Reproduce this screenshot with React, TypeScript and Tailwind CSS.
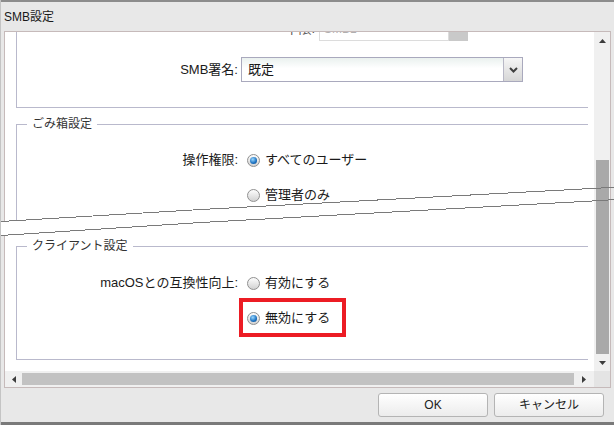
import React from 'react';

function Radio({ checked, label }: { checked?: boolean; label: string }) {
  return (
    <span className="flex items-center gap-[5px]">
      <span className="ml-[6px] flex h-[13px] w-[13px] items-center justify-center rounded-full border border-[#909090] bg-[linear-gradient(#fdfdfd,#d2d2d2)]">
        {checked && (
          <span className="h-[7px] w-[7px] rounded-full bg-[radial-gradient(circle_at_40%_35%,#9ad8ff,#1a6fbf_60%,#0d4785)]" />
        )}
      </span>
      <span className="text-[13px] leading-5 text-[#1a1a1a]">{label}</span>
    </span>
  );
}

function Arrow({ dir }: { dir: 'up' | 'down' | 'left' | 'right' }) {
  const points = {
    up: '0,4 7,4 3.5,0',
    down: '0,0 7,0 3.5,4',
    left: '4,0 4,7 0,3.5',
    right: '0,0 0,7 4,3.5',
  }[dir];
  const vertical = dir === 'up' || dir === 'down';
  return (
    <svg width={vertical ? 7 : 4} height={vertical ? 4 : 7} viewBox={vertical ? '0 0 7 4' : '0 0 4 7'}>
      <polygon points={points} fill="#3c3c3c" />
    </svg>
  );
}

function Legend({ children }: { children: React.ReactNode }) {
  return <legend className="ml-[10px] px-[5px] text-[12px] leading-4 text-[#333]">{children}</legend>;
}

export default function App() {
  return (
    <div className="relative flex h-[425px] w-[614px] flex-col overflow-hidden border-l border-[#c4c4c4] bg-[#e8e8e8] font-['Liberation_Sans','Noto_Sans_CJK_JP',sans-serif] text-[#1a1a1a]">
      {/* title bar */}
      <div className="flex h-[31px] shrink-0 items-center border-t-2 border-[#8c8c8c] pl-[3px] text-[12px]">SMB設定</div>

      {/* scroll frame */}
      <div className="mx-[3px] grid h-[357px] shrink-0 grid-cols-[1fr_16px] grid-rows-[1fr_16px] border border-[#c6baba] bg-white">
        <div className="relative overflow-hidden">
          <div className="flex flex-col pl-[11px]">
            {/* SMB protocol (scrolled partly out of view) */}
            <div className="flex h-[76px] w-[572px] flex-col border-b border-l border-[#b9b9cc]">
              <div className="-mt-[15px] flex h-6 items-center">
                <span className="w-[298px] text-right text-[13px] text-[#555]">下限:</span>
                <span className="ml-[4px] flex h-6 w-[130px] items-center border border-[#dcdcdc] pl-[4px] text-[12px] text-[#b0b0b0]">SMB1</span>
                <span className="h-6 w-[19px] bg-[#c9c9c9]" />
              </div>
              <div className="mt-[16px] flex h-[25px] items-center">
                <span className="w-[221px] text-right text-[13px]">SMB署名:</span>
                <div className="ml-[3px] flex h-[25px] w-[282px] border border-[#a9a9bd] bg-[linear-gradient(#eaf1ef,#ffffff_45%)]">
                  <span className="flex-1 pl-[6px] text-[13px] leading-[23px]">既定</span>
                  <span className="flex w-[19px] items-center justify-center border-l border-[#b8b8c6] bg-[linear-gradient(#f6f6f6,#d6d6d6)]">
                    <svg width="9" height="6" viewBox="0 0 9 6">
                      <polyline points="1,1 4.5,4.5 8,1" fill="none" stroke="#404040" strokeWidth="2" />
                    </svg>
                  </span>
                </div>
              </div>
            </div>

            {/* trash settings */}
            <fieldset className="mt-[8px] w-[572px] border-l border-t border-[#b9b9cc]">
              <Legend>ごみ箱設定</Legend>
              <div className="flex flex-col gap-[15px] pt-[18px] pb-[25px]">
                <div className="flex h-5 items-center">
                  <span className="w-[221px] text-right text-[13px]">操作権限:</span>
                  <div className="ml-[3px]">
                    <Radio checked label="すべてのユーザー" />
                  </div>
                </div>
                <div className="flex h-5 items-center pl-[224px]">
                  <Radio label="管理者のみ" />
                </div>
              </div>
            </fieldset>

            {/* client settings */}
            <fieldset className="mt-[8px] w-[572px] border-b border-l border-t border-[#b9b9cc]">
              <Legend>クライアント設定</Legend>
              <div className="flex flex-col gap-[15px] pt-[19px] pb-[31px]">
                <div className="flex h-5 items-center">
                  <span className="w-[221px] text-right text-[13px]">macOSとの互換性向上:</span>
                  <div className="ml-[3px]">
                    <Radio label="有効にする" />
                  </div>
                </div>
                <div className="flex h-5 items-center pl-[224px]">
                  <div className="relative">
                    <Radio checked label="無効にする" />
                    <span className="absolute -left-[2px] -top-[10px] h-[39px] w-[107px] border-4 border-[#ec1c24]" />
                  </div>
                </div>
              </div>
            </fieldset>
          </div>
        </div>

        {/* vertical scrollbar */}
        <div className="flex flex-col bg-[#f0f0f0]">
          <div className="flex h-[17px] items-center justify-center">
            <Arrow dir="up" />
          </div>
          <div className="flex flex-1 flex-col justify-end">
            <div className="ml-[2px] h-[194px] w-[13px] bg-[#a9a9a9]" />
          </div>
          <div className="flex h-[17px] items-center justify-center">
            <Arrow dir="down" />
          </div>
        </div>

        {/* horizontal scrollbar */}
        <div className="flex bg-[#f0f0f0]">
          <div className="flex w-[17px] items-center justify-center">
            <Arrow dir="left" />
          </div>
          <div className="my-[2px] w-[552px] bg-[#c2c2c2]" />
          <div className="flex flex-1 items-center justify-center">
            <Arrow dir="right" />
          </div>
        </div>
        <div className="bg-[#e4e4e4]" />
      </div>

      {/* footer */}
      <div className="flex h-[34px] shrink-0 justify-end gap-[6px] pr-[10px] pt-[5px]">
        <button type="button" className="h-6 w-[110px] rounded-[3px] border border-[#b4b4b4] bg-[linear-gradient(#ffffff,#ececec)] text-[12px] text-[#222]">
          OK
        </button>
        <button type="button" className="h-6 w-[110px] rounded-[3px] border border-[#b4b4b4] bg-[linear-gradient(#ffffff,#ececec)] text-[12px] text-[#222]">
          キャンセル
        </button>
      </div>
      <div className="h-[3px] shrink-0 bg-[#7a7a7a]" />

      {/* cut marks across the screenshot */}
      <svg className="pointer-events-none absolute left-0 top-0" width="614" height="425" shapeRendering="crispEdges">
        <polygon points="0,221.5 200,209.5 593,188.5 593,200.5 200,222.5 0,235.5" fill="#ffffff" />
        <polyline points="0,221.5 200,209.5 600,188 614,187.5" fill="none" stroke="#7a7a7a" strokeWidth="1" />
        <polyline points="0,235.5 200,222.5 600,200.5 614,199.5" fill="none" stroke="#7a7a7a" strokeWidth="1" />
      </svg>
    </div>
  );
}
